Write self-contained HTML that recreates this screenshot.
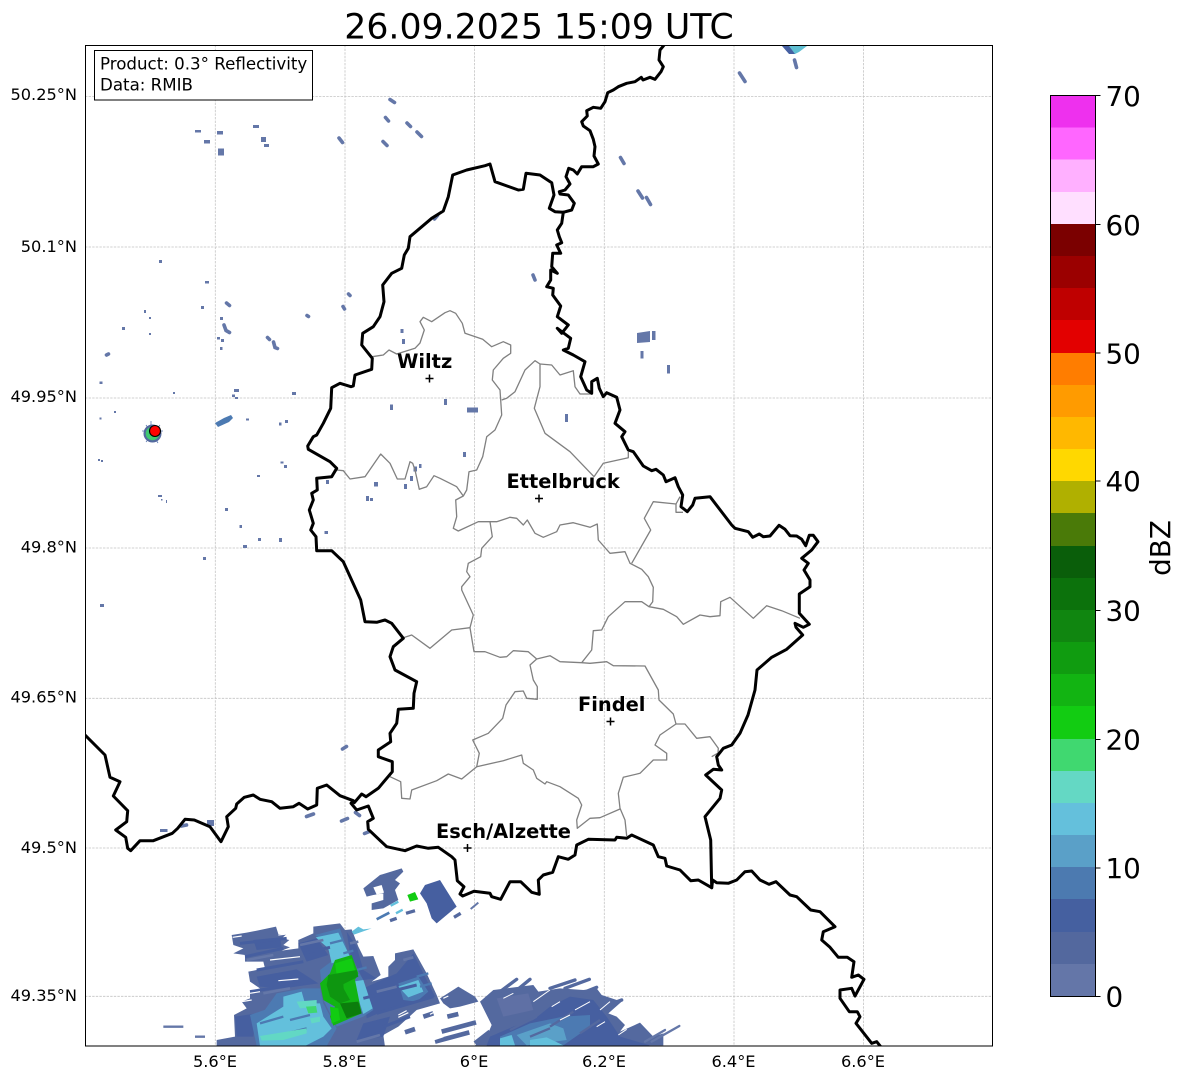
<!DOCTYPE html>
<html><head><meta charset="utf-8"><title>Radar</title>
<style>html,body{margin:0;padding:0;background:#fff}svg{display:block}text{font-family:"DejaVu Sans",sans-serif;fill:#000}</style>
</head><body>
<svg width="1184" height="1081" viewBox="0 0 1184 1081" xmlns="http://www.w3.org/2000/svg">
<defs><clipPath id="ax"><rect x="85.5" y="45.5" width="907" height="1000.5"/></clipPath></defs>
<rect width="1184" height="1081" fill="#fff"/>
<text x="539" y="38.500" font-size="34.700" text-anchor="middle">26.09.2025 15:09 UTC</text>
<g clip-path="url(#ax)">
<!-- grid -->
<path d="M215.300 45V1046M345 45V1046M474.600 45V1046M604.300 45V1046M734 45V1046M863.600 45V1046M85 96.500H992M85 247H992M85 398H992M85 548H992M85 698.300H992M85 848H992M85 996.300H992" stroke="#c4c4c4" stroke-width=".8" stroke-dasharray="2.400 1.200" fill="none"/>
<!-- small specks -->
<g fill="#6477a8">
<rect x="195" y="130" width="6" height="2.500"/><rect x="217" y="131" width="6" height="3.500"/><rect x="204" y="140" width="6" height="3.500"/><rect x="218" y="148.500" width="6" height="7"/><rect x="253" y="125" width="6" height="3"/><rect x="261" y="137" width="5" height="5"/><rect x="264" y="144" width="5" height="3"/>
<rect x="159" y="260" width="3" height="3"/><rect x="205" y="281" width="4" height="2.500"/><rect x="201" y="306" width="3" height="3"/><rect x="144" y="310" width="2" height="3"/><rect x="149" y="317" width="2" height="2"/><rect x="122" y="327" width="3" height="3"/><rect x="149" y="333" width="2" height="2"/><rect x="220" y="317" width="3" height="3"/><rect x="221" y="339" width="3" height="3"/><rect x="220" y="347" width="2.500" height="3"/><rect x="217" y="337" width="3" height="2.500"/>
<rect x="400.500" y="329" width="3" height="4"/><rect x="402" y="339" width="3" height="5"/><rect x="390" y="404.500" width="3" height="5.500"/><rect x="444" y="399" width="3" height="6"/><rect x="467" y="407.500" width="11" height="5"/><rect x="463" y="452" width="3" height="5"/><rect x="565" y="414" width="3" height="8"/><rect x="413.500" y="466.500" width="3.500" height="5"/><rect x="419" y="464" width="2.500" height="4"/><rect x="410" y="476" width="3" height="5"/><rect x="404" y="484" width="3" height="5"/><rect x="374" y="482" width="4" height="4.500"/><rect x="366" y="496" width="3" height="5"/><rect x="370" y="498" width="3" height="3"/><rect x="326" y="480" width="3" height="4"/><rect x="324.500" y="531" width="3.500" height="3"/>
<polygon points="637,333 650,331 650,342 637,343"/><rect x="652" y="331" width="3.500" height="9"/><rect x="640.500" y="351" width="3" height="7.500"/><rect x="667" y="365" width="3" height="8.500"/>
<rect x="99.500" y="381.500" width="3" height="2.500"/><rect x="173" y="392" width="2" height="2"/><rect x="114" y="411" width="2" height="2"/><rect x="99.500" y="417.500" width="2" height="2"/><rect x="246" y="418.500" width="3" height="2"/><rect x="285" y="420" width="3" height="3"/><rect x="279" y="422.500" width="2.500" height="3"/><rect x="98" y="459" width="2" height="2"/><rect x="101" y="460" width="2" height="2"/><rect x="280.500" y="461.500" width="3" height="2"/><rect x="284" y="465" width="3" height="3"/><rect x="257" y="475" width="3" height="2"/><rect x="158" y="495" width="4" height="2"/><rect x="161" y="499" width="1.500" height="1.500"/><rect x="166" y="500" width="1" height="3"/><rect x="225" y="508" width="3" height="3"/><rect x="239.500" y="525" width="2.500" height="3"/><rect x="258" y="538" width="3" height="3"/><rect x="279" y="538" width="3" height="4"/><rect x="243" y="545" width="4" height="3"/><rect x="203" y="557" width="3" height="3"/><rect x="100" y="604" width="4" height="3"/><rect x="160" y="829" width="7.500" height="3"/><rect x="207" y="820" width="7" height="6"/>
<rect x="292" y="392" width="4" height="3"/><rect x="234" y="389" width="5" height="3"/><rect x="232" y="394.500" width="3" height="2.500"/><rect x="235" y="397" width="3" height="2"/>
</g>
<g stroke="#6477a8" fill="none" stroke-linecap="round">
<path stroke-width="3.600" d="M390 99.500L394.500 102.500M385.500 117.500L388.500 121M407 123L410.500 126.500M417 132L421.500 136.500M383 141.500L387 145.500M339 138L342.500 142.500M434.500 219L437.500 215.500M739.500 73L745 81.500M620.500 157.500L624 163.500M638 191L642.500 198M646.500 197.500L650.500 204.500M533 275L535 280M226.500 303L229.500 305.500M224 325L226 330.500L229.500 332.500M267.500 337.500L269.500 339.500M273.500 342L275 347.500L277.500 348.500M307 315.500L308.500 316.500M348.500 294L350 295.500M343 306.500L344.500 309M106.500 355L108.500 354M342.500 749L346.500 746.500M306.500 816.500L313.500 814M341.500 821L347.500 818.500M355.500 812.500L359.500 815.500M364.500 833.500L369.500 831.500M181.500 826L186.500 825M794.500 60L796.500 67.500"/>
</g>
<!-- NE top echo -->
<polygon points="782,46 791,46 795,54 789,54" fill="#4660a2"/><polygon points="789,46 807,46 799,52 795,54" fill="#5fbfd2"/>
<polygon points="215,423 224,418 231,415 233,418 229,422 218,427" fill="#4c7ab2"/>
<!-- Radar site echo -->
<path d="M151 421V442M142 431H163M146 425L158 443M146 442L160 425" stroke="#5a78b0" stroke-width=".8"/>
<circle cx="152.500" cy="433.500" r="9" fill="#54699f"/><circle cx="152.500" cy="433.500" r="6.800" fill="#3fc870"/>
<g transform="translate(150 860) scale(.33333)">
<polygon fill="#54699f" points="245,225 290,218 330,210 378,200 385,222 410,222 395,235 418,240 400,255 420,262 395,272 445,265 445,240 490,220 490,200 570,190 585,210 605,208 625,260 640,290 670,288 692,345 665,365 715,350 715,320 735,300 735,280 790,268 830,340 860,405 870,430 800,450 745,500 700,525 705,560 200,560 200,540 255,530 252,465 290,445 275,425 300,415 300,395 330,385 300,365 295,335 345,325 340,305 285,305 285,285 250,280 280,265 250,255"/>
<polygon fill="#54699f" points="870,415 925,380 975,410 985,425 930,440 900,445 880,430"/>
<path stroke="#54699f" fill="none" stroke-width="14" d="M892 470L925 462M875 515L978 487M855 545L958 517M765 517L795 507M820 470L850 460M975 550L1020 515"/>
<path stroke="#6477a8" fill="none" stroke-width="7" d="M40 500H100M135 530H165"/>
<polygon fill="#465fa0" points="310,240 390,232 395,262 320,270"/><polygon fill="#465fa0" points="320,350 440,328 505,370 400,385 330,380"/><polygon fill="#465fa0" points="445,250 500,235 535,285 470,305"/><polygon fill="#465fa0" points="640,385 740,340 790,280 830,360 855,410 720,445 650,475"/><polygon fill="#465fa0" points="255,470 320,460 310,530 260,530"/><polygon fill="#465fa0" points="590,215 620,260 640,330 680,355 640,360 600,280"/><polygon fill="#465fa0" points="640,490 720,470 700,530 620,540"/>
<polygon fill="#4c7ab2" points="380,400 460,385 510,385 520,430 420,450 330,470"/><polygon fill="#4c7ab2" points="300,465 400,430 520,430 560,505 530,558 320,558"/><polygon fill="#4c7ab2" points="495,225 570,205 600,295 640,360 670,450 640,470 560,500 520,420 510,330 550,300 520,240"/><polygon fill="#4c7ab2" points="745,370 805,350 835,395 800,425 760,420"/>
<polygon fill="#63c0dc" points="320,490 400,440 400,410 455,395 465,430 510,430 520,470 545,505 520,530 465,558 330,558"/><polygon fill="#63c0dc" points="497,232 565,218 600,290 545,310 535,265"/><polygon fill="#63c0dc" points="608,365 640,360 668,445 640,462"/><polygon fill="#63c0dc" points="745,380 805,360 820,395 775,412"/>
<polygon fill="#63c0dc" points="605,215 625,200 640,208 665,205 612,224"/>
<!-- striations -->
<path fill="none" stroke="#465fa0" stroke-width="9" d="M270 250L410 235M285 290L400 265M320 330L460 305M640 415L800 375M680 460L850 410M460 280L540 262M300 395L460 370M700 500L780 470M650 530L700 515"/>
<path fill="none" stroke="#6477a8" stroke-width="8" d="M290 300L370 285M340 400L420 385M600 250L625 245M450 255L520 240M760 300L790 292M680 395L740 380M620 545L690 525"/>
<path fill="none" stroke="#4c7ab2" stroke-width="7" d="M330 490L400 470M420 480L480 465M370 530L470 505M540 250L580 240M580 280L610 272M620 330L650 322M800 350L835 340M810 380L845 370"/>
<polygon fill="#62d8c4" points="330,528 470,505 470,520 400,540 335,542"/><polygon fill="#62d8c4" points="440,425 500,420 500,440 450,445"/><polygon fill="#62d8c4" points="480,475 510,470 510,485 485,490"/>
<polygon fill="#3fd770" points="468,440 498,438 502,458 475,460"/>
<polygon fill="#12b414" points="555,300 605,285 625,340 615,360 635,460 550,497 540,470 555,440 520,420 510,370 540,340"/>
<polygon fill="#12cc12" points="555,310 605,295 618,340 560,345"/><polygon fill="#12cc12" points="540,440 565,445 570,480 545,490"/>
<polygon fill="#0e9610" points="535,345 620,330 625,350 575,375 600,420 570,430 540,410 530,375"/><polygon fill="#0b7d0c" points="570,430 625,425 635,460 590,475"/><polygon fill="#0e9610" points="550,375 580,370 582,400 555,405"/>
<path fill="none" stroke="#fff" stroke-width="3.500" d="M385 362L445 357M300 400L330 395M275 425L305 420M360 300L450 290M248 232L275 228M385 225L410 222M745 465L770 452M745 472L775 458M840 463L850 458M880 415L895 408M850 540L880 530"/>
<!-- north clusters -->
<polygon fill="#54699f" points="640,85 690,45 755,25 760,35 735,60 750,70 735,90 745,120 700,145 665,150 665,130 700,120 700,100 670,105 650,110"/>
<polygon fill="#fff" points="670,82 695,75 702,98 680,104"/>
<polygon fill="#465fa0" points="810,100 825,75 870,60 920,140 860,190 845,175 830,130"/>
<path fill="none" stroke="#54699f" stroke-width="10" d="M912 172L932 160M768 160L795 152M720 182L740 175"/>
<path fill="none" stroke="#6477a8" stroke-width="6" d="M962 147L985 128"/>
<path fill="none" stroke="#63c0dc" stroke-width="7" d="M738 160L758 149M722 137L745 125"/>
<path fill="none" stroke="#4c7ab2" stroke-width="8" d="M680 178L718 158"/>
<polygon fill="#12cc12" points="772,105 795,96 805,118 780,125"/>
</g>
<!-- right echo in zoom 8 space -->
<g transform="translate(450 860) scale(.33333)">
<polygon fill="#54699f" points="90,425 130,390 170,385 250,375 265,395 330,385 400,390 440,385 455,405 515,425 475,460 500,470 525,495 510,515 570,488 610,530 640,520 640,556 75,556 110,530 125,495"/>
<path fill="none" stroke="#54699f" stroke-width="10" stroke-linecap="round" d="M150 395L200 358M195 395L240 358M300 385L375 360M345 385L418 358M395 400L440 382M460 440L515 420"/>
<path fill="none" stroke="#6477a8" stroke-width="7" stroke-linecap="round" d="M605 545L688 498M585 545L645 510"/>
<polygon fill="#465fa0" points="120,530 190,500 250,480 300,440 360,410 430,420 470,470 510,530 600,556 110,556"/>
<polygon fill="#5f70a5" points="140,415 235,400 250,450 160,470"/>
<polygon fill="#4c7ab2" points="150,530 240,490 340,470 420,465 420,500 340,556 150,556"/>
<polygon fill="#5aa0c8" points="200,525 300,490 340,505 350,540 230,556"/>
<polygon fill="#63c0dc" points="150,535 185,525 195,556 150,556"/><polygon fill="#63c0dc" points="240,540 290,532 340,556 240,556"/>
<path fill="none" stroke="#54699f" stroke-width="7" d="M180 510L260 470M300 500L370 455M390 520L450 480M240 530L300 505"/>
<path fill="none" stroke="#fff" stroke-width="3" d="M250 425L300 390M305 440L330 425M330 480L360 465M375 450L420 425M440 500L465 485M450 450L480 425M505 525L530 508M160 415L190 400"/>
</g>
<!-- regional borders -->
<g fill="none" stroke="#808080" stroke-width="1.300" stroke-linejoin="round">
<path d="M372.300 356.700L383.300 355L389 350L396.700 354L415 348.300L420 343L424.300 330L420 321.700L423.300 317.300L431.700 321.700L445 312.700L450 310.700L455.700 313.300L462.300 323.300L465 333.300L482.700 339.300L491.700 346.700L503.300 341.700L510.700 345L510.700 353.300L503.300 358.300L493.300 370L492.300 380L500 390L501.700 415L495 430L486.700 436.700L482.700 456.700L476.700 470L469 471.700L466.700 490L463.300 496"/>
<path d="M336.700 470L343.300 470.700L350 479L365 476.700L380.700 454L390 463.300L397.300 479L405 479L410 461.700L412.700 463.300L415 470L419.300 489.300L426.700 486.700L434 475.700L440 478.300L456.700 486.700L463.300 496L455.700 500L456.700 516.700L453.300 528.300L458.300 531L478.300 521.700L496.700 521.700L510 517.300L516.700 518.300L523.300 525L527.300 520L535 533.300L543.300 537.300L556.700 531.700L560 525L573.300 522.700L590 527.300L597.300 524L598.300 540L610 553.300L625 551.700L630 563.300L641.700 569.300L648.300 576.700L653.300 587.300L652.700 601.700L649 606.700"/>
<path d="M490 521.700L492.300 536.700L481.700 548.300L480.700 556.700L468.300 563.300L466.700 571.700L470 576.700L461.700 586.700L461.700 590L473.300 615L470 627.700L474 651.700L485 651.700L500 657.300L506.700 656.700L513.300 650.700L528.300 651.700L536.700 659"/>
<path d="M501.700 400L506.700 398.300L515 391.700L525 370L535 360.700L540 364L540 386.700L534.300 408.300L545 433.300L570 451.700L594 476.700L603.300 463.300L628.300 457.700L628.300 451.700"/>
<path d="M540 364L551.700 365L560 375L573.300 370.700L575 386.700L580 394L591.700 394"/>
<path d="M680 496.700L676 504L653.300 501.700L644.300 518.300L650.700 530L631.700 563.300M676 504L676 512.300L683 512.300"/>
<path d="M581.700 662.700L591.700 650L593.300 630.700L601.700 630L608.300 616.700L625 601.700L641.700 601.700L649 606.700L663.300 609.300L676.700 616.700L683.300 624.300L700 615L710 616.700L720 615.700L720.700 601.700L730 597.300L753.300 618.300L766.700 605.700L781.700 610.700L800 618.300"/>
<path d="M401.700 638.300L411.700 635L430 648.300L451.700 630L470 627.700"/>
<path d="M536.700 659L550 655.700L560 661.700L581.700 662.700L590 663.300L606.700 661.700L613.300 665.700L645 666L658.300 690L659 700L673.300 714L676 724L660 735L655 745L666.700 753.300L666.700 760L653.300 760L640 773.300L623.300 777.300L618.300 793.300L620 808.300L625 820L626.700 836"/>
<path d="M676 724L685 724L696.700 738.300L710 736.700L718.300 748.300L718 753L711.700 756.700"/>
<path d="M536.700 659L530 665L533.300 680L537.300 686.700L537.300 699.300L526.700 698.300L523.300 691L515 691.700L506 705L502.700 718.300L488.300 733.300L472.700 740L479.300 753.300L476.700 766.700"/>
<path d="M390 776.700L400.700 781.700L401.700 798.300L410 799L411.700 790L436.700 780.700L448.300 774L461.700 779L476.700 766.700L503.300 760.700L521.700 755L523.300 763.300L533.300 770L536.700 778.300L545 784L546.700 781.700L560 786.700L578.300 798.300L581.700 805L576.700 820L577.300 828.300L590 818.300L600 817.700L620 809"/>
</g>
<!-- national borders -->
<g fill="none" stroke="#000" stroke-width="3" stroke-linejoin="round" stroke-linecap="round">
<path d="M665 44L660 50L659 60L663.300 66.700L661 71.700L655 79.300L650 77.300L643 80L641.300 77.300L635 81.700L626.700 83.300L618.300 86.700L613.300 90L607.700 92.700L605 101.700L600.700 108.300L593.300 107.300L586.700 110.700L587.300 116L581.700 121.700L583.300 126L590 130.700L593.300 139.300L595 146.700L594 156L598.300 164L593.300 166.700L581.700 166.700L577.300 174L573.300 170L568.700 168.300L566 176.700L570 184L565 190L559.300 191.700L560 194L568.300 195L574.300 203.300L571.700 210L563.300 212.300"/>
<path d="M563.300 212.300L561.700 223.300L557.300 230L559.300 236.700L561.700 242.700L556.700 245L560.700 253.300L552.700 253.300L551.700 266.700L557.300 273.300L550.700 270L550.700 280L546.700 286.700L553.300 288.300L552.700 295L560.700 306L557.300 316.700L568.300 325L561.700 333.300L557.300 328.300L570.700 338.300L568.300 348.300L563.300 350L573.300 355L585 361.700L580.700 376.700L586.700 390L591.700 393.300L591.700 381.700L597.300 378.300L599.300 388.300L603.300 396.700L606.700 392.700L616.700 397.300L620 410L615 423.300L625 431.700L621.700 436.700L628.300 450L633.300 451.700L643.300 466L651.700 470.700L656 469.300L663.300 475L666 481.700L675 477.700L678.300 486.700L682.700 495L681 506.700L687.300 511.700L692.700 505L695 498.300L710 496.700L731.700 525L735 528.300L748.300 531.700L752.700 537.300L759.300 534L763.300 536.700L770 536L779 525.300L785 529.300L790 535.700L796.700 536L801.700 539.300L805.700 545.700L809.300 535.300L813.300 535.300L818 541.700L811.700 550L801.700 558.300L808.300 563.300L804 570L810 580L810 586.700L799.300 594L799.300 613.300L809.300 624.300L803.300 627.300L795 623.300L796 627.300L802.700 635L786.700 649.300L771.700 657.300L757 670L755 690L748 715L740 733.300L731.700 745L723.300 748.300L716.700 756.700L718.300 765L721.700 770L713.300 769.300L705.700 775L721.700 790L720 798.300L705 816.700L710.700 840L711.700 887.700"/>
<path d="M563.300 212.300L555 211.700L549.300 208.300L554 195L551.700 182.700L540 175L526 173.300L523.300 189.300L518.300 190L495 181.700L490 164L485 165.700L466.700 170L452.700 175L448.300 196.700L443.300 211L431.700 218.300L410 236.700L408.300 248.300L404.300 255L401.700 268.300L391.700 273.300L382.700 285L384 301.700L380 316.700L373.300 326.700L362.700 333.300L361.700 345L372.300 358.300L371.700 369.300L355 375L353.300 386L351 386.700L340 383.300L331.700 387.700L330.700 408.300L323.300 423.300L316.700 435L313.300 436.700L307.700 446L308.300 449.300L330 461.700L336.700 468.300L331.700 476.700L316.700 478.300L317.300 490L311.700 493.300L313.300 500L309.300 510L313.300 523.300L310.700 530L316 536.700L316.700 550.700L331.700 550.700L343.300 561.700L360.700 600L365 621.700L376.700 622.300L385 620L391.700 623.300L403.300 638.300L393.300 646.700L390 656.700L395 670L416.700 681.700L414 693.300L413.300 708.300L398.300 709.300L396.700 723.300L390 733.300L390.700 741.700L378.300 750L378.300 756.700L392.300 761.700L392.300 771.700L378.300 788.300L366 796.700L361.700 794L354.300 802.700"/>
<path d="M84 734L105 755L110 777.300L120 781.700L113.300 796L127.700 810.700L126.700 821.700L115.700 830L125.700 837.300L127.700 848.300L130.700 850.700L140 840.700L153.300 840.700L172.300 833.300L177.700 828.300L185 819.300L194.300 820L210 826.700L221 841.700L228.300 826.700L226.700 816.700L235.700 808.300L236.700 804L244.300 797.300L253.300 795L260 799.300L271.700 801.700L280 808.300L293.300 806.700L299 803.300L307.700 809L316.700 805L317.300 788.300L326.700 785L340 795.700L353.300 800.700L351 803.300L356.700 810L368.300 806L373.300 818.300L367.700 821.700L368.300 829.300L386.700 846.700L405 850.700L416.700 846L428.300 848.300L438.300 847.300L451.700 856.700L455 860L457.300 880.700L464 886.700L460 894L462.700 896L474 891.300L490 893.300L491.700 896.700L500.700 899.300L510 881.700L520.700 881.700L531.700 892.300L539.300 894.300L538.300 880L543.300 875L552.700 872.300L558.300 856.700L568.300 859.300L575 855L576.700 845L588.300 839.300L615 840L616.700 837.300L626.700 838.300L631.700 835L653.300 845L658.300 856.700L665 858.300L666.700 866L680 870L690.700 880.700L698.300 880L711.700 887.700L712.700 880L716.700 882.700L728.300 883.300L736.700 880L745 871.700L751.700 871L760 880L769 884.300L776 881.700L790 895L796.700 896.700L810.700 910L820 911.700L835 926.700L823.300 931.700L821.700 940L830 947.300L838.300 957.300L847.300 957.300L854 961.700L851.700 977.300L858.300 975L864 979.300L855 996L851.700 988.300L840 990L840 998.300L849.300 1011.700L857.300 1011.700L860 1016.700L856 1023.300L871.700 1043.300L876.700 1041.700L881 1047"/>
</g>
<!-- city markers -->
<g stroke="#000" stroke-width="1.500" fill="none">
<path d="M425.500 378.500H433.500M429.500 374.500V382.500"/>
<path d="M535 498.500H543M539 494.500V502.500"/>
<path d="M606.500 721.500H614.500M610.500 717.500V725.500"/>
<path d="M463.500 848H471.500M467.500 844V852"/>
</g>
<circle cx="155" cy="431" r="5.500" fill="#f00" stroke="#000" stroke-width="1.100"/>
<g font-size="19.400" font-weight="bold">
<text x="397" y="368">Wiltz</text>
<text x="506.500" y="488">Ettelbruck</text>
<text x="578" y="711">Findel</text>
<text x="436" y="838">Esch/Alzette</text>
</g>
</g>
<rect x="85.500" y="45.500" width="907" height="1000.500" fill="none" stroke="#000" stroke-width="1"/>
<rect x="94.500" y="50.500" width="218" height="49.500" fill="#fff" stroke="#000" stroke-width="1"/>
<text x="100" y="69.500" font-size="16.670">Product: 0.3° Reflectivity</text>
<text x="100" y="90.500" font-size="16.670">Data: RMIB</text>
<g font-size="16.200" text-anchor="end">
<text x="77" y="100">50.25°N</text><text x="77" y="252">50.1°N</text><text x="77" y="402">49.95°N</text><text x="77" y="552.500">49.8°N</text><text x="77" y="702.500">49.65°N</text><text x="77" y="853">49.5°N</text><text x="77" y="1001">49.35°N</text>
</g>
<g font-size="16.200" text-anchor="middle">
<text x="215" y="1067">5.6°E</text><text x="344.500" y="1067">5.8°E</text><text x="474" y="1067">6°E</text><text x="604" y="1067">6.2°E</text><text x="733.500" y="1067">6.4°E</text><text x="863" y="1067">6.6°E</text>
</g>
<!-- colorbar -->
<g shape-rendering="crispEdges">
<rect x="1051" y="95.500" width="44.500" height="32.500" fill="#ee30ee"/>
<rect x="1051" y="127.400" width="44.500" height="32.500" fill="#ff66ff"/>
<rect x="1051" y="159.400" width="44.500" height="33" fill="#ffb0ff"/>
<rect x="1051" y="192" width="44.500" height="32.500" fill="#ffdfff"/>
<rect x="1051" y="224" width="44.500" height="32.500" fill="#7b0000"/>
<rect x="1051" y="256" width="44.500" height="32.500" fill="#9b0000"/>
<rect x="1051" y="288" width="44.500" height="32.500" fill="#bf0000"/>
<rect x="1051" y="320" width="44.500" height="33" fill="#e30000"/>
<rect x="1051" y="353" width="44.500" height="32.500" fill="#ff7d00"/>
<rect x="1051" y="385" width="44.500" height="32.500" fill="#ff9b00"/>
<rect x="1051" y="417" width="44.500" height="32.500" fill="#ffb800"/>
<rect x="1051" y="449" width="44.500" height="32.500" fill="#ffd800"/>
<rect x="1051" y="481" width="44.500" height="32.500" fill="#b0b000"/>
<rect x="1051" y="513" width="44.500" height="33" fill="#4a7a08"/>
<rect x="1051" y="546" width="44.500" height="32.500" fill="#0a5e0a"/>
<rect x="1051" y="578" width="44.500" height="32.500" fill="#0c720c"/>
<rect x="1051" y="610" width="44.500" height="32.500" fill="#108610"/>
<rect x="1051" y="642" width="44.500" height="32.500" fill="#109c10"/>
<rect x="1051" y="674" width="44.500" height="33" fill="#12b412"/>
<rect x="1051" y="706" width="44.500" height="33" fill="#12cc12"/>
<rect x="1051" y="739" width="44.500" height="32.500" fill="#40d870"/>
<rect x="1051" y="771" width="44.500" height="32.500" fill="#64d8c4"/>
<rect x="1051" y="803" width="44.500" height="32.500" fill="#64c0dc"/>
<rect x="1051" y="835" width="44.500" height="32.500" fill="#5aa0c8"/>
<rect x="1051" y="867" width="44.500" height="32.500" fill="#4c7ab0"/>
<rect x="1051" y="899" width="44.500" height="33" fill="#4560a0"/>
<rect x="1051" y="932" width="44.500" height="32.500" fill="#53689e"/>
<rect x="1051" y="964" width="44.500" height="32.500" fill="#6476a8"/>
</g>
<rect x="1050.500" y="95.500" width="45" height="901" fill="none" stroke="#000" stroke-width="1"/>
<path d="M1095.500 95.500H1100.500M1095.500 224.500H1100.500M1095.500 353H1100.500M1095.500 481H1100.500M1095.500 610.500H1100.500M1095.500 739.500H1100.500M1095.500 868H1100.500M1095.500 996.500H1100.500" stroke="#000" stroke-width="1"/>
<g font-size="27.800">
<text x="1105.500" y="106">70</text><text x="1105.500" y="235">60</text><text x="1105.500" y="363.500">50</text><text x="1105.500" y="491">40</text><text x="1105.500" y="620.500">30</text><text x="1105.500" y="749.500">20</text><text x="1105.500" y="878">10</text><text x="1105.500" y="1006.500">0</text>
</g>
<text transform="translate(1170 548) rotate(-90)" font-size="27.800" text-anchor="middle">dBZ</text>
</svg>
</body></html>
